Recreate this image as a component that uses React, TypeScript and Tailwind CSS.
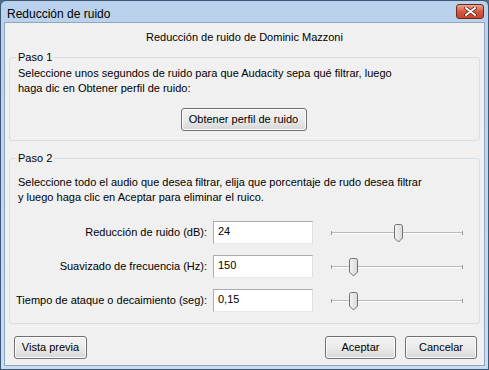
import React from "react";

const font = { fontFamily: '"Liberation Sans", Arial, sans-serif' };

function Slider({ pos }: { pos: number }) {
  return (
    <div className="relative w-[132px] h-[20px]">
      <div className="absolute left-0 right-0 top-[9px] h-[2px] bg-[#b9b9b9] border-b border-white" />
      <div className="absolute left-0 top-[8px] w-[1px] h-[4px] bg-[#9a9a9a]" />
      <div className="absolute right-0 top-[8px] w-[1px] h-[4px] bg-[#9a9a9a]" />
      <svg className="absolute top-[1px]" style={{ left: pos }} width="11" height="19" viewBox="0 0 11 19">
        <defs>
          <linearGradient id="tg" x1="0" y1="0" x2="1" y2="0">
            <stop offset="0" stopColor="#f4f4f4" />
            <stop offset="1" stopColor="#d9d9d9" />
          </linearGradient>
        </defs>
        <path d="M1.5 2.5 Q1.5 0.5 3.5 0.5 H7.5 Q9.5 0.5 9.5 2.5 V14 L5.5 18 L1.5 14 Z" fill="url(#tg)" stroke="#707070" />
      </svg>
    </div>
  );
}

function Btn({ children, className = "" }: { children: React.ReactNode; className?: string }) {
  return (
    <div
      className={
        "h-[23px] flex items-center justify-center whitespace-nowrap rounded-[3px] border border-[#707070] bg-gradient-to-b from-[#f2f2f2] via-[#ebebeb] to-[#d6d6d6] text-black shadow-[inset_0_0_0_1px_#fcfcfc] " +
        className
      }
    >
      {children}
    </div>
  );
}

export default function App() {
  return (
    <div className="w-[489px] h-[370px] bg-[#4a6c8f] overflow-hidden" style={font}>
      <div className="w-[489px] h-[370px] border border-[#3c5874] bg-gradient-to-b from-[#b9d1ea] to-[#c9dcf1] flex flex-col rounded-t-[6px]">
        {/* title bar */}
        <div className="h-[21px] flex items-start justify-between pl-[6px] pr-[4px] shrink-0">
          <span className="text-[12px] text-black leading-none mt-[7px]">Reducción de ruido</span>
          <div className="w-[28px] h-[15px] mt-[3px] rounded-[3px] border border-[#6d2b22] bg-gradient-to-b from-[#e8a493] via-[#d3593e] to-[#c8462c] flex items-center justify-center">
            <svg width="13" height="9" viewBox="0 0 13 9">
              <path d="M2 1 L11 8 M11 1 L2 8" stroke="#4a1a10" strokeWidth="3.4" strokeLinecap="round" />
              <path d="M2 1 L11 8 M11 1 L2 8" stroke="#ffffff" strokeWidth="2" strokeLinecap="round" />
            </svg>
          </div>
        </div>
        {/* client area */}
        <div className="flex-1 mx-[3px] mb-[3px] border border-[#8ea6bf] bg-[#f0f0f0] flex flex-col text-[11px] text-black whitespace-nowrap">
          <div className="text-center pt-[6px] h-[29px]">Reducción de ruido de Dominic Mazzoni</div>
          <div className="mx-[4px] relative border border-[#d5dfe5] rounded-[3px] mt-[5px] h-[84px]">
            <span className="absolute left-[6px] top-[-9px] bg-[#f0f0f0] px-[2px] leading-[16px]">Paso 1</span>
            <div className="pt-[8px] pl-[8px] leading-[15px]">
              Seleccione unos segundos de ruido para que Audacity sepa qué filtrar, luego
              <br />
              haga dic en Obtener perfil de ruido:
            </div>
            <div className="flex justify-center mt-[12px]">
              <Btn className="w-[126px] border-[#3c7fb1] from-[#eaf6fd] via-[#d9f0fc] to-[#a7d9f5] ml-[-2px]">Obtener perfil de ruido</Btn>
            </div>
          </div>
          <div className="mx-[4px] relative border border-[#d5dfe5] rounded-[3px] mt-[17px] h-[166px]">
            <span className="absolute left-[6px] top-[-9px] bg-[#f0f0f0] px-[2px] leading-[16px]">Paso 2</span>
            <div className="pt-[16px] pl-[8px] leading-[15px]">
              Seleccione todo el audio que desea filtrar, elija que porcentaje de rudo desea filtrar
              <br />y luego haga clic en Aceptar para eliminar el ruico.
            </div>
            <div className="flex flex-col gap-[11px] mt-[16px]">
              {[
                ["Reducción de ruido (dB):", "24", 62],
                ["Suavizado de frecuencia (Hz):", "150", 17],
                ["Tiempo de ataque o decaimiento (seg):", "0,15", 17],
              ].map(([l, v, p]) => (
                <div key={l as string} className="flex items-center h-[23px]">
                  <div className="w-[203px] text-right pr-[6px]">{l}</div>
                  <div className="w-[100px] h-[23px] bg-white border border-[#abadb3] border-b-[#e3e9ef] border-r-[#dbdfe6] pl-[4px] leading-[19px]">{v}</div>
                  <div className="ml-[18px]">
                    <Slider pos={p as number} />
                  </div>
                </div>
              ))}
            </div>
          </div>
          <div className="flex items-center mt-[12px] pl-[9px] pr-[7px]">
            <Btn className="w-[73px]">Vista previa</Btn>
            <div className="flex-1" />
            <Btn className="w-[71px]">Aceptar</Btn>
            <Btn className="w-[72px] ml-[9px]">Cancelar</Btn>
          </div>
        </div>
      </div>
    </div>
  );
}
